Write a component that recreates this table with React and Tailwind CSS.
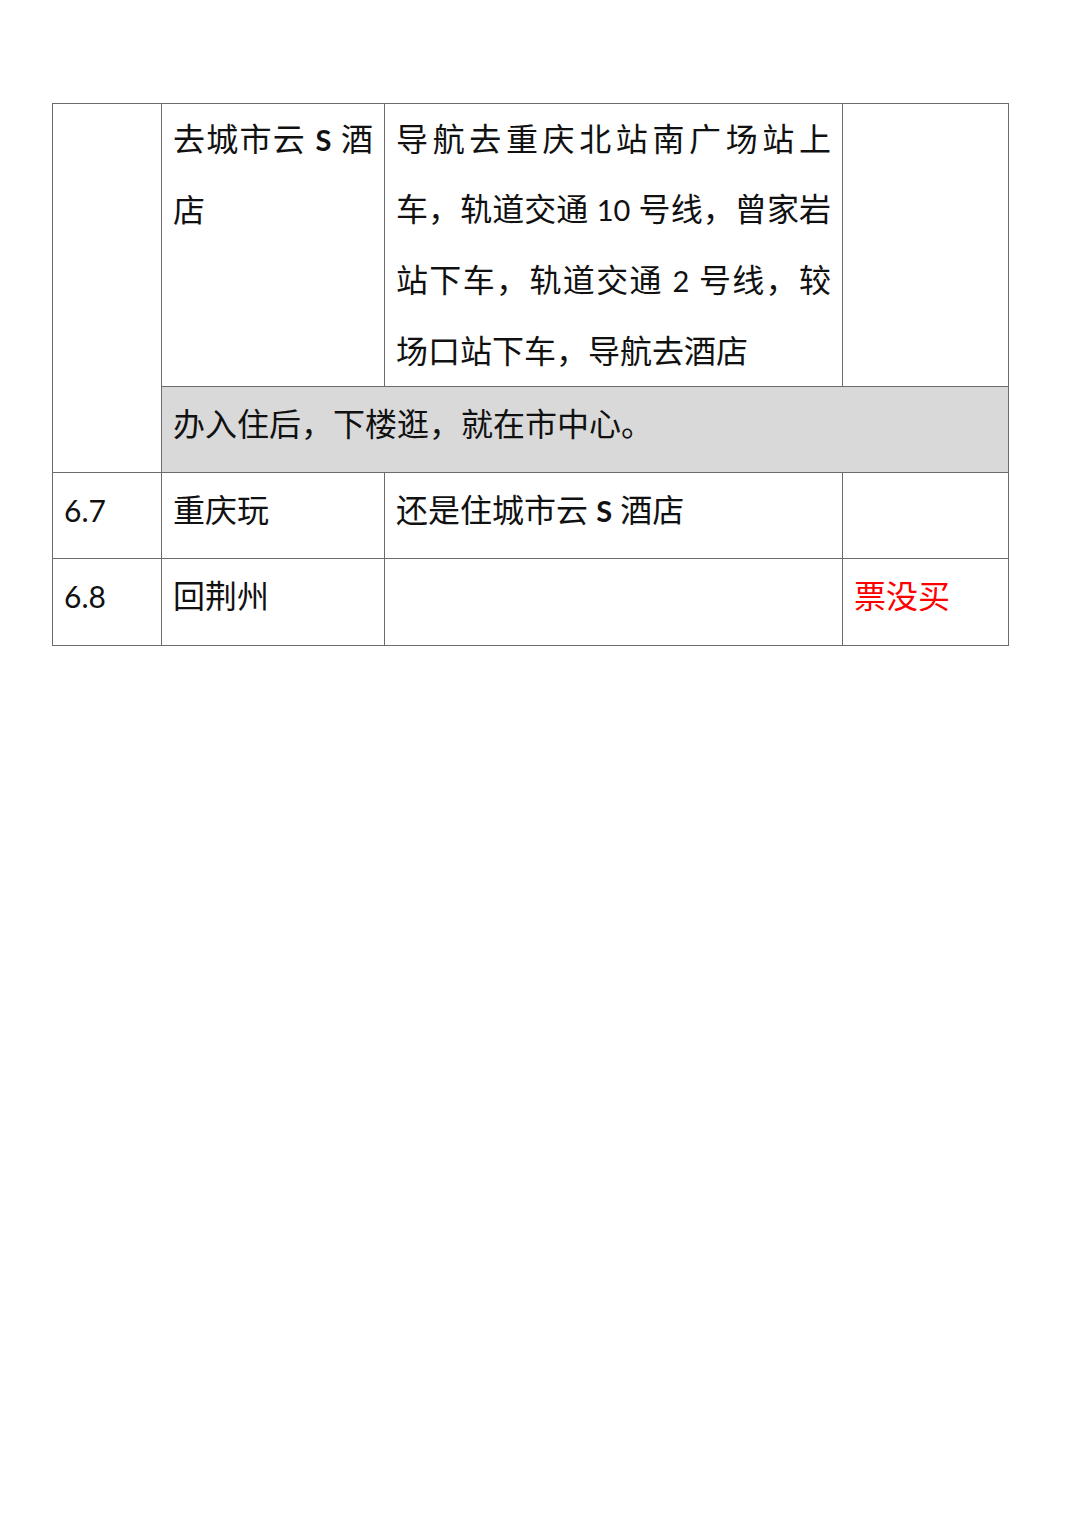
const cell = 'border border-[#6b6b6b] align-top px-[11px] pt-[2px] leading-[70px]';
const top = 'border border-[#6b6b6b] align-top px-[11px] pt-0 leading-[70px]';
const just = 'block whitespace-nowrap text-justify [text-align-last:justify]';
const lat = 'text-[29px]';

export default function App() {
  return (
    <div className="min-h-[1528px] w-[1080px] bg-white pt-[103px] pl-[52px] text-[32px] text-[#111] [font-family:Lato,'Noto_Sans_CJK_SC',sans-serif]">
      <table className="table-fixed border-collapse w-[956px]">
        <colgroup>
          <col className="w-[109px]" />
          <col className="w-[223px]" />
          <col className="w-[458px]" />
          <col className="w-[166px]" />
        </colgroup>
        <tbody>
          <tr className="h-[281px]">
            <td rowSpan={2} className={top}></td>
            <td className={top}>
              <span className={just}>去城市云 <b className={lat}>S</b> 酒</span>
              <span className="block">店</span>
            </td>
            <td className={top}>
              <span className={just}>导航去重庆北站南广场站上</span>
              <span className={just}>车，轨道交通 <span className={lat}>10</span> 号线，曾家岩</span>
              <span className={just}>站下车，轨道交通 <span className={lat}>2</span> 号线，较</span>
              <span className="block">场口站下车，导航去酒店</span>
            </td>
            <td className={top}></td>
          </tr>
          <tr className="h-[86px]">
            <td colSpan={3} className={`${cell} bg-[#d9d9d9]`}>办入住后，下楼逛，就在市中心。</td>
          </tr>
          <tr className="h-[86px]">
            <td className={cell}><span className="text-[30px]">6.7</span></td>
            <td className={cell}>重庆玩</td>
            <td className={cell}>还是住城市云 <b className={lat}>S</b> 酒店</td>
            <td className={cell}></td>
          </tr>
          <tr className="h-[87px]">
            <td className={cell}><span className="text-[30px]">6.8</span></td>
            <td className={cell}>回荆州</td>
            <td className={cell}></td>
            <td className={`${cell} text-[#ff0000]`}>票没买</td>
          </tr>
        </tbody>
      </table>
    </div>
  );
}
